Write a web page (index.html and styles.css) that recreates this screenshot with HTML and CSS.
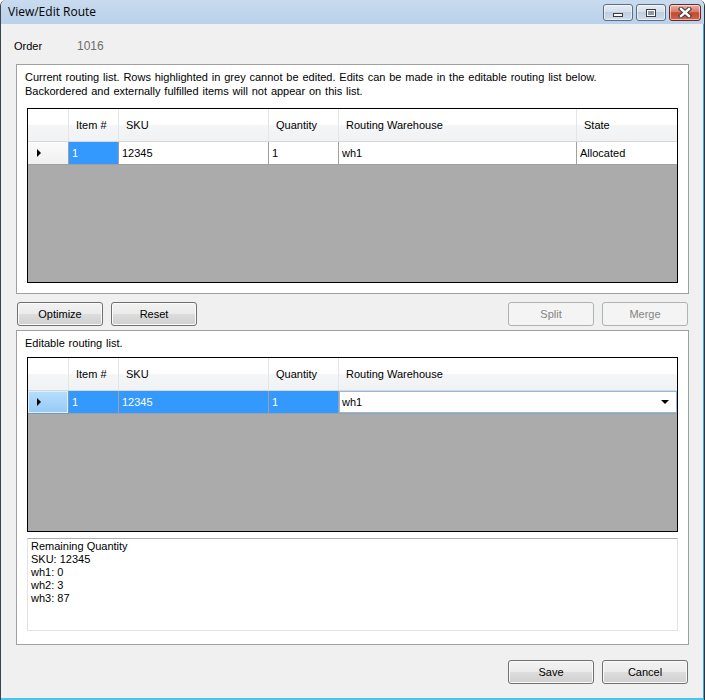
FILE: index.html
```html
<!DOCTYPE html>
<html lang="en">
<head>
  <meta charset="UTF-8">
  <title>View/Edit Route</title>
  <link rel="stylesheet" href="styles.css">
</head>
<body>
  <div class="window">
    <div class="titlebar">
      <span class="title">View/Edit Route</span>
      <div class="caption-btns">
        <span class="cap cap-min"><i></i></span>
        <span class="cap cap-max"><i></i></span>
        <span class="cap cap-close">
          <svg width="14" height="11" viewBox="0 0 14 11">
            <path d="M3 2 L11 9 M11 2 L3 9" stroke="#3b3b3b" stroke-width="4.4" stroke-linecap="square"/>
            <path d="M3 2 L11 9 M11 2 L3 9" stroke="#fff" stroke-width="2.4" stroke-linecap="square"/>
          </svg>
        </span>
      </div>
    </div>
    <div class="client">
      <div class="order-row">
        <span class="order-label">Order</span>
        <span class="order-value">1016</span>
      </div>

      <div class="group group-current">
        <p class="note">Current routing list. Rows highlighted in grey cannot be edited. Edits can be made in the editable routing list below.<br>Backordered and externally fulfilled items will not appear on this list.</p>
        <div class="grid">
          <div class="grid-row grid-head">
            <div class="cell c-rh"></div>
            <div class="cell c-item">Item #</div>
            <div class="cell c-sku">SKU</div>
            <div class="cell c-qty">Quantity</div>
            <div class="cell c-wh">Routing Warehouse</div>
            <div class="cell c-state">State</div>
          </div>
          <div class="grid-row grid-data">
            <div class="cell c-rh"><span class="arrow"></span></div>
            <div class="cell c-item current">1</div>
            <div class="cell c-sku">12345</div>
            <div class="cell c-qty">1</div>
            <div class="cell c-wh">wh1</div>
            <div class="cell c-state">Allocated</div>
          </div>
        </div>
      </div>

      <div class="button-row">
        <button class="btn">Optimize</button>
        <button class="btn">Reset</button>
        <span class="spacer"></span>
        <button class="btn" disabled>Split</button>
        <button class="btn" disabled>Merge</button>
      </div>

      <div class="group group-edit">
        <p class="note">Editable routing list.</p>
        <div class="grid">
          <div class="grid-row grid-head">
            <div class="cell c-rh"></div>
            <div class="cell c-item">Item #</div>
            <div class="cell c-sku">SKU</div>
            <div class="cell c-qty">Quantity</div>
            <div class="cell c-wh c-last">Routing Warehouse</div>
          </div>
          <div class="grid-row grid-data selected">
            <div class="cell c-rh"><span class="arrow"></span></div>
            <div class="cell c-item">1</div>
            <div class="cell c-sku">12345</div>
            <div class="cell c-qty">1</div>
            <div class="cell c-wh c-last combo-cell">
              <div class="combo"><span>wh1</span><span class="combo-arrow"></span></div>
            </div>
          </div>
        </div>
        <div class="textbox">Remaining Quantity<br>SKU: 12345<br>wh1: 0<br>wh2: 3<br>wh3: 87</div>
      </div>

      <div class="button-row footer">
        <span class="spacer"></span>
        <button class="btn">Save</button>
        <button class="btn">Cancel</button>
      </div>
    </div>
  </div>
</body>
</html>
```

FILE: styles.css
```css
* {
  margin: 0;
  padding: 0;
  box-sizing: border-box;
}
html, body {
  background: #fff;
}
body {
  font-family: "Liberation Sans", Arial, sans-serif;
  font-size: 11px;
  color: #000;
}
.window {
  width: 705px;
  height: 700px;
  display: flex;
  flex-direction: column;
  border-left: 1px solid #3c4450;
  border-right: 1px solid #2c3440;
  border-radius: 6px 6px 0 0;
  overflow: hidden;
  background: #f0f0f0;
}

/* title bar */
.titlebar {
  height: 24px;
  display: flex;
  align-items: flex-start;
  background: linear-gradient(#c9dbee, #b9d1ea);
  padding: 0 3px 0 7px;
}
.title {
  font-family: "Open Sans", "Noto Sans", sans-serif;
  font-size: 12px;
  line-height: 24px;
  color: #000;
}
.caption-btns {
  margin-left: auto;
  display: flex;
  gap: 3px;
  padding-top: 4px;
}
.cap {
  width: 30px;
  height: 17px;
  border: 1px solid #5d6c80;
  border-radius: 3px;
  background: linear-gradient(#e6edf5, #d3dfec 45%, #bfcfe1 50%, #cfdcea);
  box-shadow: inset 0 0 0 1px rgba(255,255,255,0.55);
  display: flex;
  align-items: center;
  justify-content: center;
}
.cap-min i {
  display: block;
  width: 10px;
  height: 4px;
  margin-top: 4px;
  background: #fff;
  border: 1px solid #3b3b3b;
}
.cap-max i {
  display: block;
  width: 10px;
  height: 8px;
  background: #8a98a8;
  border: 1px solid #3b3b3b;
  box-shadow: inset 0 0 0 1px #fff;
}
.cap-close {
  width: 32px;
  border-color: #6b2a20;
  background: linear-gradient(#e9b2a5, #d8796a 45%, #c6472f 52%, #d3644c);
}

/* client area */
.client {
  flex: 1;
  display: flex;
  flex-direction: column;
  border-right: 1px solid #3fa6e2;
  border-bottom: 2px solid #4cc3ee;
}
.order-row {
  display: flex;
  line-height: 14px;
  padding: 15px 0 0 13px;
}
.order-label {
  width: 63px;
}
.order-value {
  color: #6d6d6d;
  font-size: 12px;
}
.group {
  margin: 11px 14px 0 15px;
  border: 1px solid #a0a0a0;
  background: #fff;
  padding: 5px 10px 10px;
}
.group-edit {
  margin-top: 4px;
  padding-bottom: 13px;
}
.note {
  line-height: 14px;
  margin-left: -2px;
  word-spacing: 0.8px;
}

/* grid */
.grid {
  margin-top: 10px;
  height: 175px;
  border: 1px solid #000;
  background: #ababab;
  display: flex;
  flex-direction: column;
}
.group-edit .grid {
  margin-top: 7px;
}
.grid-row {
  display: flex;
}
.cell {
  flex: none;
  white-space: nowrap;
  overflow: hidden;
}
.c-rh { width: 41px; }
.c-item { width: 50px; }
.c-sku { width: 150px; }
.c-qty { width: 70px; }
.c-wh { width: 238px; }
.c-state, .c-last { flex: 1; }

.grid-head {
  height: 33px;
  background: linear-gradient(#fff 0%, #fff 48%, #f4f5f6 52%, #f1f2f3 100%);
  border-bottom: 1px solid #d8d8d8;
}
.grid-head .cell {
  line-height: 33px;
  padding-left: 7px;
  border-right: 1px solid #e3e5e8;
}
.grid-head .cell:last-child {
  border-right: none;
}
.grid-data {
  height: 23px;
}
.grid-data .cell {
  background: #fff;
  line-height: 22px;
  padding-left: 3px;
  border-right: 1px solid #a0a0a0;
  border-bottom: 1px solid #a0a0a0;
}
.grid-data .cell:last-child {
  border-right: none;
}
.grid-data .c-rh {
  background: linear-gradient(#fbfbfb, #f0f0f0);
  border-right: 1px solid #a0a0a0;
  padding-left: 9px;
  display: flex;
  align-items: center;
}
.arrow {
  width: 0;
  height: 0;
  border-top: 4px solid transparent;
  border-bottom: 4px solid transparent;
  border-left: 4px solid #000;
}
.grid-data .current {
  background: #3399ff;
  color: #fff;
}
.selected .cell {
  background: #3399ff;
  color: #fff;
}
.selected .c-rh {
  background: linear-gradient(#b6defc, #94cbf5);
  box-shadow: inset 0 0 0 1px #d9effd;
  border-right: 1px solid #7e98ad;
  border-bottom: 1px solid #7e98ad;
}
.selected .combo-cell {
  background: #fff;
  color: #000;
  padding: 0;
}
.combo {
  height: 22px;
  border: 1px solid #8ebbe6;
  display: flex;
  align-items: center;
  padding: 0 7px 0 2px;
}
.combo-arrow {
  margin-left: auto;
  width: 0;
  height: 0;
  border-left: 4px solid transparent;
  border-right: 4px solid transparent;
  border-top: 4px solid #000;
}

/* remaining quantity box */
.textbox {
  margin-top: 6px;
  height: 93px;
  border: 1px solid #e2e3ea;
  border-top-color: #abadb3;
  padding: 1px 3px;
  line-height: 13px;
}

/* buttons */
.button-row {
  display: flex;
  gap: 8px;
  margin: 8px 15px 0 16px;
}
.footer {
  margin-top: 15px;
}
.spacer {
  flex: 1;
}
.btn {
  width: 86px;
  height: 24px;
  font-family: "Liberation Sans", Arial, sans-serif;
  font-size: 11px;
  color: #000;
  border: 1px solid #707070;
  border-radius: 3px;
  background: linear-gradient(#f2f2f2 0%, #ebebeb 50%, #dddddd 51%, #cfcfcf 100%);
  box-shadow: inset 0 0 0 1px #fbfbfb;
}
.btn:disabled {
  color: #838383;
  border-color: #adb2b5;
  background: #f4f4f4;
  box-shadow: none;
}
```
